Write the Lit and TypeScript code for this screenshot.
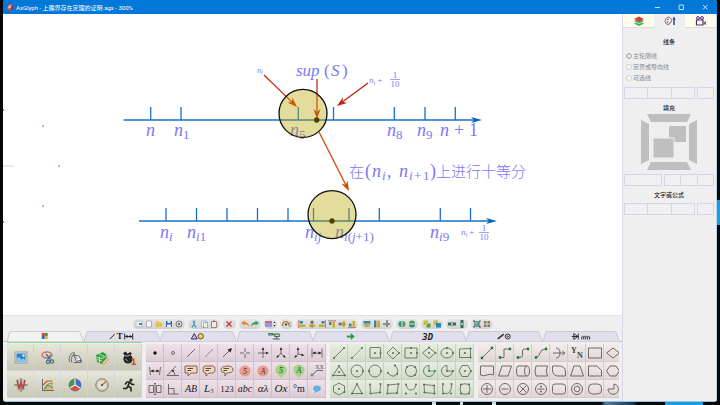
import { LitElement, html, svg, css } from "lit";
import type { SVGTemplateResult } from "lit";
import { customElement, property } from "lit/decorators.js";

type Icon = [label: string, art: SVGTemplateResult];

/* ---------- small drawing helpers (18 x 18 cells) ---------- */

const path = (d: string) => svg`<path d=${d}></path>`;
const solid = (d: string, fill = "#222") => svg`<path d=${d} fill=${fill} stroke="none"></path>`;
const dot = (x: number, y: number, r = 1, fill = "#666") =>
  svg`<circle cx=${x} cy=${y} r=${r} fill=${fill} stroke="none"></circle>`;
const ring = (x: number, y: number, r: number) => svg`<circle cx=${x} cy=${y} r=${r}></circle>`;
const glyph = (t: string, size = 10, style = "italic", y = 12, x = 9, fill = "#222") =>
  svg`<text x=${x} y=${y} font-size=${size} font-style=${style} fill=${fill} stroke="none" text-anchor="middle">${t}</text>`;
const handles = (...pts: number[][]) => pts.map(([x, y]) => svg`<circle cx=${x} cy=${y} r="1.1" fill="#66705f" stroke="none"></circle>`);

/* ---------- palettes ---------- */

const mediaIcons: Icon[] = [
  ["Image", svg`<rect x="3" y="3" width="12" height="11" fill="#dfe6ea" stroke="#8a98a0"></rect><rect x="4.5" y="4.5" width="9" height="8" fill="#2f82cf" stroke="none"></rect>${solid("M4.5 12.500V9.500L7 8L9.500 10.500L11.500 9.500L13.500 11V12.500Z", "#8ec4e8")}${dot(11.500, 6.500, 1.2, "#ffe9a0")}`],
  ["Cut out", svg`<ellipse cx="8" cy="6" rx="5" ry="3" stroke="#cf6f6f" stroke-width="1.400"></ellipse><g stroke="#4b7690" stroke-width="1.300">${path("M7 5L12 11M12 5.500L8.500 11")}${ring(13, 12.5, 1.6)}${ring(9, 13, 1.6)}</g>`],
  ["Pen", svg`${path("M3.500 13C2 8 5 2.500 9 4M6 13.500C4.500 10 6 5.500 9 5")}<path d="M7.500 6L13 7L15 11L10.500 12.500Z" fill="#e6eef0"></path>${path("M8 6.500L11.500 10M8 13.500H15")}${dot(15, 12, 1.100, "#27708a")}`],
  ["Eraser", svg`${solid("M3 6L10 3L14 6V8L9 15L4 13Z", "#36a043")}<g stroke="#d7f1d3" stroke-width=".800">${path("M3.500 8L9 9.500L14 6.500M4 10.500L9 12M6 5L11 7.500M6.500 8V13.500")}</g><path d="M9 14L14 9L15.500 10.500L11 15Z" fill="#f3cf8f" stroke="#a97746" stroke-width=".600"></path>`],
  ["Brush", svg`${dot(8, 10, 4.600, "#222")}${solid("M3 4L6 2.500L7.500 5L10 3L12 4.500L9.500 7L5 7.500Z")}<g stroke="#ddd" stroke-width=".800">${path("M4.500 6.500Q7 8 10 6M5.500 10L8 12.500")}</g>${solid("M11.500 10.500L14.500 9V14.500H16V16H11.500V14.500H13V11.300H11.500Z", "#df4a2c")}`],
  ["Curve", svg`<rect x="4.500" y="3.500" width="9" height="10" fill="#b9bab4" stroke="none"></rect><g stroke="#555" stroke-width=".900">${path("M2 9H16M9 2V16")}</g><path d="M5 4L7 12.500L9 7L11 12.500L13 4" stroke="#c93a3a" stroke-width="1.300"></path>`],
  ["Chart", svg`${solid("M4 14L8 7L11 9L14 4V14Z", "#e4b968")}<g stroke="#ce4b3c" stroke-width="1.100">${path("M4 9L8 5L13 5")}</g><g stroke="#3a9ac8" stroke-width="1.100">${path("M5 13L9 9L14 12")}</g><g stroke="#57a444">${path("M6 13Q9 5 14 8")}</g>${path("M3.500 3V14.500H15")}`],
  ["Colors", svg`<circle cx="9" cy="9" r="6" fill="#d9503f" stroke="#777"></circle>${solid("M9 9V3A6 6 0 0 0 3.800 12Z", "#3e9c4c")}${solid("M9 9V3A6 6 0 0 1 14.200 12Z", "#3e6fd0")}<g stroke="#e9e9e9" stroke-width="1.200">${path("M9 9V3M9 9L14.200 12M9 9L3.800 12")}</g>`],
  ["Gauge", svg`<circle cx="9" cy="9" r="6.200" fill="#e3e1cf" stroke="#666"></circle><circle cx="9" cy="9" r="4.800" stroke="#a5a392" stroke-dasharray="1 1"></circle><path d="M8 10L13 5.500" stroke="#df5b3d" stroke-width="1.200"></path>${dot(9, 9, 1, "#555")}`],
  ["Run", svg`${dot(11, 4, 1.6, "#222")}<g stroke="#222" stroke-width="1.600">${path("M9.500 6L8 10L11 12V15.500M8 10L6.500 12.500H3M5 8.500L7 6H10L12 8.500H14.500")}</g>`],
];

const bubble = (d: string) => svg`<path d=${d} fill="#f5d3b8" stroke="#705a50"></path><path d="M5.500 6.500H11M5.500 8.500H9" stroke="#4a3a34" stroke-width=".900"></path>`;
const badge = (t: string, fill: string) => svg`${dot(9, 9, 5.6, fill)}${glyph(t, 8, "italic", 12, 9, "#5a2a2a")}`;
const pin = (t: string) => svg`${solid("M9 16L4.300 11A5.500 5.500 0 1 1 13.700 11Z", "#a5d385")}${glyph(t, 8, "italic", 11, 9, "#234a1a")}`;

const markIcons: Icon[] = [
  ["Point", dot(9, 9, 1.7, "#111")],
  ["Open point", ring(9, 9, 1.5)],
  ["Line", path("M5 13L13 5")],
  ["Thin line", svg`<path d="M5 13L13 5" stroke-width=".600"></path>`],
  ["Arrow", svg`${path("M5 13L13 5")}${solid("M14 4L12.500 8.500L11 7L9.500 5.500Z")}`],
  ["Cross", svg`${path("M9 4V8M9 10V14M4 9H8M10 9H14")}`],
  ["Axes", svg`${path("M9 5V14M4 9H13")}${solid("M9 3L10.300 6H7.700ZM15 9L12 10.300V7.700Z")}`],
  ["Axes 3D", svg`${path("M9 5V9L5.500 13M9 9L12.500 13")}${solid("M9 3L10.300 6H7.700ZM4.500 14L5.200 11.200L7.200 12.600ZM13.500 14L12.800 11.200L10.800 12.600Z")}`],
  ["Axes oblique", svg`${path("M8 5V10L5.500 13M8 10L13 11")}${solid("M8 3L9.300 6H6.700ZM4.500 14L5.200 11.200L7.200 12.600ZM14.500 11.200L11.500 12.300V9.700Z")}`],
  ["Dimension", svg`${path("M4 4.500V13.500M14 4.500V13.500M5 9H13")}${solid("M4.500 9L7.500 7.500V10.500ZM13.500 9L10.500 7.500V10.500Z")}`],
  ["Dimension 2", svg`${path("M3.500 5L4.500 13M14.500 5L13.500 13M5 9H13")}${solid("M4.500 9L7.500 7.500V10.500ZM13.500 9L10.500 7.500V10.500Z")}`],
  ["Angle", svg`${path("M3 13.500H15M3 13.500L12 4M8 8.500Q11 10 11 13.500")}${solid("M7.500 8L10.500 8.300L9 10.500Z")}`],
  ["Callout", bubble("M3 4H15V11H9L6 14V11H3Z")],
  ["Round callout", bubble("M5 4H13Q15 4 15 7.500T13 11H9L6 14V11H5Q3 11 3 7.500T5 4Z")],
  ["Oval callout", bubble("M9 4Q15 4 15 7.500T9 11L7 14V11Q3 10.500 3 7.500T9 4Z")],
  ["Number badge", badge("5", "#ee9a90")],
  ["Letter badge", badge("A", "#ee9a90")],
  ["Number pin", pin("5")],
  ["Letter pin", pin("A")],
  ["Leader", svg`${ring(4, 13, 1)}${path("M5 12L9 8.500H15")}${glyph("XX", 6, "normal", 7, 11.5, "#555")}`],
  ["Text frame", svg`${path("M3 5.500H7.500V12.500H3ZM10.500 5.500H15V12.500H10.500ZM9 4V14M8 3.500H10M8 14.500H10")}`],
  ["Right angle", svg`${path("M4.500 4V14H14.500M4.500 8.500H10V14")}`],
  ["AB", glyph("AB")],
  ["L5", svg`${glyph("L", 11, "italic", 12, 7)}${glyph("5", 6, "italic", 13, 12)}`],
  ["123", glyph("123", 9, "normal")],
  ["abc", glyph("abc", 10)],
  ["Greek", glyph("αλ", 11)],
  ["Ox", glyph("Ox", 11)],
  ["Degree", glyph("°m", 10, "normal")],
  ["Comment", svg`<ellipse cx="9" cy="8.500" rx="3.800" ry="3" fill="#5fb1e6" stroke="none"></ellipse>${solid("M7 10L6.500 13.500L10 11Z", "#5fb1e6")}`],
];

const shapeIcons: Icon[] = [
  ["Segment", svg`${path("M4 14L14 4")}${handles([4, 14], [14, 4])}`],
  ["Thin segment", svg`<path d="M4 14L14 4" stroke-width=".600"></path>${handles([4, 14], [14, 4])}`],
  ["Square", svg`${path("M4 3.500H14.500V14H4Z")}${handles([9, 9], [14.5, 9])}`],
  ["Diamond", svg`${path("M9 3L15 9L9 15L3 9Z")}${handles([9, 9], [15, 9])}`],
  ["Rectangle", svg`${path("M3 4H15V14H3Z")}${handles([9, 9], [9, 4], [15, 9])}`],
  ["Rhombus", svg`${path("M9 3.500L15.500 9L9 14.500L2.500 9Z")}${handles([9, 9], [9, 3.5], [15.500, 9])}`],
  ["Ellipse", svg`<ellipse cx="9" cy="9" rx="6" ry="5"></ellipse>${handles([9, 9], [9, 4], [15, 9])}`],
  ["Skewed box", svg`${path("M3.500 5L14.500 4.500V13.500H3.500Z")}${handles([9, 9], [14.500, 4.500], [14.5, 13.5])}`],
  ["Triangle", svg`${path("M9 4L15 13.500H3Z")}${handles([9, 4], [15, 13.500], [3, 13.5], [9, 10])}`],
  ["Circle", svg`${ring(9, 9, 6)}${handles([9, 9], [15, 9])}`],
  ["Circle 2", svg`${ring(9, 9, 6)}${handles([3, 9], [15, 9])}`],
  ["Arc", svg`${path("M11 3.500Q16 9 12 13Q8 16 4 11")}${handles([11, 3.500], [4, 11], [13, 12])}`],
  ["Circle 3", svg`${ring(9, 9, 5.500)}${handles([5, 5], [13, 5], [13, 13])}`],
  ["Sector", svg`${path("M9 3.500A5.500 5.500 0 1 0 14.500 9")}<path d="M9 9H14.500" stroke="#2f9fb5"></path>${path("M9 9V3.500")}${handles([9, 9], [15, 9])}`],
  ["Sector 2", svg`${path("M9 3.500A5.500 5.500 0 1 0 14.500 9H9Z")}${handles([9, 9], [15, 9])}`],
  ["Hexagon", svg`${path("M6 3.500H12L15 9L12 14.500H6L3 9Z")}${handles([9, 9], [15, 9])}`],
  ["Hexagon 2", svg`${path("M9 3L14.500 6V12L9 15L3.500 12V6Z")}${handles([9, 9], [14.500, 12])}`],
  ["Triangle 2", svg`${path("M9 4L14 13.500H4Z")}${handles([9, 4], [14, 13.500], [4, 13.5])}`],
  ["Open polyline", svg`${path("M4 4.500L4.500 13.500L14 12.500L14.500 4")}${handles([4, 4.500], [4.5, 13.5], [14, 12.500], [14.500, 4])}`],
  ["Quadrilateral", svg`${path("M4 5L14.500 4L13 13L3.500 13.500Z")}${handles([4, 5], [14.500, 4], [13, 13], [3.500, 13.500])}`],
  ["Bezier", svg`${path("M4 4.500Q5 10 9 10T14 4.500")}${handles([4, 4.500], [14, 4.500], [4, 13.500], [14, 13.500])}`],
  ["Polygon", svg`${path("M4 4.500L14 5.500L14.500 13.500L4.500 12.500Z")}${handles([4, 4.500], [14, 5.500], [14.500, 13.500], [4.500, 12.500])}`],
  ["Open curve", svg`${path("M5 4Q4 12 6 13.500Q14 15 13.500 4")}${handles([5, 4], [5, 13.500], [13, 13.500], [13.500, 4])}`],
  ["Closed curve", svg`${path("M5 4.500Q9 3 13 4.500Q15 9 13 13.500Q9 15 5 13.500Q3 9 5 4.500Z")}${handles([5, 4.500], [13, 4.500], [13, 13.500], [5, 13.500])}`],
];

const ends = (x1: number, y1: number, x2: number, y2: number) => svg`${dot(x1, y1, 1.400, "#17803a")}${dot(x2, y2, 1.400, "#17803a")}`;
const flowIcons: Icon[] = [
  ["Connector", svg`${path("M4 14L14 4")}${ends(4, 14, 14, 4)}`],
  ["Elbow", svg`${path("M4 13.500H8V5H14")}${ends(4, 13.5, 14, 5)}`],
  ["Rounded elbow", svg`${path("M4 13.500H6Q8.500 13.500 8.500 11V7Q8.500 5 10.500 5H14")}${ends(4, 13.5, 14, 5)}`],
  ["Curved connector", svg`${path("M4 13.500Q7 13 8 9Q9 5 14 5")}${ends(4, 13.5, 14, 5)}`],
  ["Junction", path("M3 9H15M12.500 7L15 9L12.500 11M6 4Q10 4 10 9T6 14")],
  ["Yes / No", svg`<g font-weight="bold">${glyph("Y", 8, "normal", 9, 6, "#444")}${glyph("N", 8, "normal", 14, 12, "#444")}</g>`],
  ["Process", path("M2.500 4H15.500V14H2.500Z")],
  ["Decision", path("M9 4L15.500 9L9 14L2.500 9Z")],
  ["Document", path("M2.500 4H15.500V13Q12 11.500 9 13T2.500 13Z")],
  ["Data", path("M6 4H15.500L12 14H2.500Z")],
  ["Cylinder", svg`${path("M4 4H13Q15.500 4 15.500 9T13 14H4Q2.500 14 2.500 9T4 4ZM12.500 4Q10.500 5 10.500 9T12.500 14")}`],
  ["Stored data", path("M4 4H15.500Q13 9 15.500 14H4Q2 9 4 4Z")],
  ["Card", path("M2.500 4H10Q15.500 5 15.500 10V14H7Q2.500 13 2.500 8Z")],
  ["Manual", path("M6 4H12L15.500 14H2.500Z")],
  ["Snip", path("M2.500 4H11L15.500 8.500V14H2.500Z")],
  ["Preparation", path("M6 4H12L15.500 9L12 14H6L2.500 9Z")],
  ["Sum", svg`${ring(9, 9, 5.500)}${path("M9 5V13M5 9H13")}`],
  ["Minus", svg`${ring(9, 9, 5.500)}${path("M5.500 9H12.500")}`],
  ["Times", svg`${ring(9, 9, 5.500)}${path("M5.500 5.500L12.500 12.500M12.500 5.500L5.500 12.500")}`],
  ["Divide", svg`${ring(9, 9, 5.500)}${path("M5.500 9H12.500")}${dot(9, 6.500)}${dot(9, 11.500)}`],
  ["Rounded box", svg`<rect x="2.500" y="4" width="13" height="10" rx="2.500"></rect>`],
  ["Double ring", svg`${ring(9, 9, 5.500)}${ring(9, 9, 2.800)}`],
  ["Terminal", svg`<rect x="2.500" y="4" width="13" height="10" rx="4"></rect>`],
  ["Pie", path("M10 4A5.200 5.200 0 1 1 4 9H10Z")],
];

/* ---------- toolbar (10 x 10 icons) ---------- */

const bars = (a: string, b: string) => svg`${solid(a, "#2e8f94")}${solid(b, "#c2b12c")}`;
const page = svg`<path d="M2.500 2H7.500V8H2.500Z" fill="#f6f8fa" stroke="#9aa6b0" stroke-width=".800"></path>`;
const toolGroups: Icon[][] = [
  [
    ["New window", svg`<rect x="2" y="2" width="6" height="6" fill="#e9eef2" stroke="#b4bec6" stroke-width=".800"></rect>${solid("M5 4H8V6H5Z", "#3d87b8")}`],
    ["New", page],
    ["Open", solid("M1.500 2.500H4.500L5.500 3.500H8V5H9L7.500 8H1.500Z", "#efbf3f")],
    ["Save", svg`${solid("M2 2H8V8H2Z", "#4262b8")}${solid("M3.500 2H6.500V4H3.500ZM3 5.500H7V8H3Z", "#dfe6f5")}`],
    ["Settings", svg`<circle cx="5" cy="5" r="3" stroke="#777" stroke-width="1"></circle>${dot(5, 5, 1.2, "#777")}`],
  ],
  [
    ["Cut", svg`<g stroke="#4c9bc4" stroke-width="1">${path("M4 1.500L6 7M6 1.500L4 7")}</g>${dot(3.500, 7.500, 1, "#4c9bc4")}${dot(6.500, 7.500, 1, "#4c9bc4")}`],
    ["Copy", svg`${page}<path d="M4.500 3.500H8.500V8.500H4.500Z" fill="#eef2f5" stroke="#8b97a1" stroke-width=".700"></path>`],
    ["Paste", svg`<path d="M2.500 2.500H7.500V8.500H2.500Z" fill="#eee9df" stroke="#8a7f70" stroke-width=".900"></path>${solid("M4 1.500H6V3H4Z", "#777")}`],
  ],
  [["Delete", svg`<path d="M2.500 2.500L7.500 7.500M7.500 2.500L2.500 7.500" stroke="#d8332f" stroke-width="1.300"></path>`]],
  [
    ["Undo", svg`${solid("M1 4L4.500 1.500V3Q8.500 3 9 7.500Q7 5 4.500 5.200V6.500Z", "#f08228")}`],
    ["Redo", svg`${solid("M9 4L5.500 1.500V3Q1.500 3 1 7.500Q3 5 5.500 5.200V6.500Z", "#2fa560")}`],
  ],
  [["Page background", svg`${solid("M0 2H7V8H0Z", "#8b9fe0")}${solid("M0 2H7V4H0Z", "#cc6a7b")}${solid("M8.500 4L9.500 2.500L10.500 4ZM8.500 6L9.500 7.500L10.500 6Z")}`]],
  [["Rotate", svg`<path d="M2 7A3 3 0 1 1 7.500 6.500" stroke="#c8762c" stroke-width="1.400"></path>${dot(5, 5.5, 1.1, "#333")}${dot(9, 4, 0.700, "#2671c0")}${dot(9, 7, 0.700, "#2671c0")}`]],
  [
    ["Align left", svg`${bars("M3 2H6V4.500H3Z", "M3 5.500H8.500V8H3Z")}${solid("M1.500 1H2.300V9H1.500Z", "#c04848")}`],
    ["Align center", svg`${bars("M3.500 2H6.500V4.500H3.500Z", "M2 5.500H8V8H2Z")}${solid("M4.700 1H5.400V9H4.700Z", "#c04848")}`],
    ["Align right", svg`${bars("M4.500 2H7.500V4.500H4.500Z", "M2 5.500H7.500V8H2Z")}${solid("M7.900 1H8.600V9H7.900Z", "#c04848")}`],
    ["Align top", svg`${bars("M2 3H4.500V6H2Z", "M5.500 3H8V8.500H5.500Z")}${solid("M1 1.500H9V2.300H1Z", "#c04848")}`],
    ["Align middle", svg`${bars("M2 3.500H4.500V6.500H2Z", "M5.500 2H8V8H5.500Z")}${solid("M1 4.700H9V5.400H1Z", "#c04848")}`],
    ["Align bottom", svg`${bars("M2 4.500H4.500V7.500H2Z", "M5.500 2H8V7.500H5.500Z")}${solid("M1 7.900H9V8.600H1Z", "#c04848")}`],
  ],
  [
    ["Same width", svg`${bars("M1.500 2H8.500V4H1.500Z", "M2.500 6H7.500V8H2.500Z")}${solid("M1.500 4.600H8.500V5.300H1.500Z", "#333")}`],
    ["Same height", svg`${bars("M2 1.500H4V8.500H2Z", "M6 1.500H8V8.500H6Z")}${solid("M4.600 1.500H5.300V8.500H4.600Z", "#c04848")}`],
    ["Center", svg`<path d="M5 1V9M1 5H9" stroke="#333" stroke-width=".900" stroke-dasharray="3 1"></path>${dot(5, 5, 1.2, "#7a8490")}`],
  ],
  [
    ["Flip horizontal", svg`${solid("M4.500 2A3 3 0 0 0 4.500 8Z", "#2e8f94")}${solid("M5.500 2A3 3 0 0 1 5.500 8Z", "#4f9c4a")}`],
    ["Flip vertical", svg`${solid("M2 4.500A3 3 0 0 1 8 4.500Z", "#4f9c4a")}${solid("M2 5.500A3 3 0 0 0 8 5.500Z", "#2e8f94")}`],
  ],
  [
    ["Bring forward", svg`${solid("M4.500 4.500H8.500V8.500H4.500Z", "#4f9c4a")}${solid("M1.500 1.500H6V6H1.500Z", "#c9bd30")}`],
    ["Send back", svg`${solid("M1.500 1.500H6V6H1.500Z", "#c9bd30")}${solid("M4 4H9V8.500H4Z", "#2a86b8")}`],
  ],
  [
    ["Distribute horizontally", svg`${solid("M1 3.500H9V6.500H1Z", "#2e6e78")}${solid("M4 4H6V6H4Z", "#c9bd30")}`],
    ["Distribute vertically", svg`${solid("M3.500 1H6.500V9H3.500Z", "#2e6e78")}${solid("M4 4H6V6H4Z", "#c9bd30")}`],
  ],
  [
    ["Group", svg`${solid("M2 2H8V8H2Z", "#5a9bb0")}${solid("M3 3H5V5H3Z", "#c9bd30")}${dot(2, 2, 0.8, "#333")}${dot(8, 2, 0.8, "#b33")}${dot(2, 8, 0.8, "#b33")}${dot(8, 8, 0.8, "#333")}`],
    ["Ungroup", svg`${solid("M2 2H4.500V4.500H2ZM5.500 5.500H8V8H5.500Z", "#4f8c60")}${solid("M5.500 2H8V4.500H5.500ZM2 5.500H4.500V8H2Z", "#c25a5a")}`],
  ],
];

/* ---------- category tabs (77 x 11) ---------- */

const tabIcons: Icon[] = [
  ["Media", svg`${solid("M35 2H38V5H35Z", "#d8432f")}${solid("M38 2H41V5H38Z", "#2f9c45")}${solid("M35 5H38V8H35Z", "#2c6ec8")}${solid("M38 5H41V8H38Z", "#eab22c")}`],
  ["Annotations", svg`<path d="M26 8L31 3" stroke="#222"></path><g font-weight="bold">${glyph("T", 9, "normal", 8, 36)}</g><path d="M41 2.500V8.500M49 2.500V8.500M42 5.500H48" stroke="#222"></path>${solid("M41 5.500L44 4V7ZM49 5.500L46 4V7Z")}`],
  ["Shapes", svg`<path d="M34.500 2.500L37.500 8H31.500Z" fill="#d0b4ea" stroke="#3e2b58"></path><circle cx="41" cy="5.300" r="2.700" fill="#f4cf5a" stroke="#6a5426"></circle>`],
  ["Flow", svg`<rect x="32" y="2.500" width="4" height="1.500" stroke="#2c7a4a"></rect><rect x="38" y="3" width="4.500" height="2.500" fill="#bfe6a8" stroke="#2c7a4a"></rect><path d="M36 3.500H38M40 5.500V8M36 8H43" stroke="#555"></path>`],
  ["Arrows", solid("M34 4.400H38V2L42 5.500L38 9V6.600H34Z", "#22a045")],
  ["3D", svg`<g font-weight="bold" font-family="DejaVu Sans Mono">${glyph("3D", 9, "italic", 9, 38)}</g>`],
  ["Mechanics", svg`<path d="M32 8L38 3" stroke="#333" stroke-width="1.600"></path><circle cx="42" cy="5.500" r="2.500" stroke="#333"></circle><circle cx="42" cy="5.500" r=".700" stroke="#333"></circle>`],
  ["Circuits", svg`<path d="M29 5.500H36M31 2.500V8.500L35 5.500ZM35.500 2.500V8.500M39 8.500V6Q40 4.500 41 6V8.500M41 6Q42 4.500 43 6V8.500M43 6Q44 4.500 45 6V8.500M45 6Q46 4.500 47 6V8.500" stroke="#222" stroke-width=".900"></path>`],
];

/* ---------- number lines on the canvas ---------- */

const INK = "#7b78f5";
const axis = (y: number, x1: number, x2: number, ticks: number[]) => svg`
  <path d=${`M${x1} ${y}H${x2 - 6}`} stroke="#1a6fcb" stroke-width="1.500"></path>
  ${solid(`M${x2} ${y}L${x2 - 11} ${y - 3}L${x2 - 8} ${y}L${x2 - 11} ${y + 3}Z`, "#0a62c6")}
  ${ticks.map((x) => svg`<path d=${`M${x} ${y}V${y - 13}`} stroke="#1a6fcb" stroke-width="1.300"></path>`)}`;

const arrow = (x1: number, y1: number, x2: number, y2: number, color: string) => {
  const a = Math.atan2(y2 - y1, x2 - x1);
  const at = (back: number, side: number) =>
    `${(x2 - back * Math.cos(a) - side * Math.sin(a)).toFixed(1)} ${(y2 - back * Math.sin(a) + side * Math.cos(a)).toFixed(1)}`;
  return svg`<path d=${`M${x1} ${y1}L${at(7, 0)}`} stroke=${color} stroke-width="1.300"></path>
    ${solid(`M${x2} ${y2}L${at(10, 3.5)}L${at(7, 0)}L${at(10, -3.5)}Z`, color)}`;
};

/* A variable with its index: letters slant, digits and brackets stand upright. */
const mark = (x: number, y: number, base: string, sub = "") => svg`
  <text x=${x} y=${y} font-size="18" font-style="italic">${base}</text>
  <text x=${x + 9} y=${y + 3} font-size="13">${[...sub].map((c) => svg`<tspan font-style=${/[a-z]/.test(c) ? "italic" : "normal"}>${c}</tspan>`)}</text>`;

const tenth = (x: number, y: number, gap: number, rise: number) => svg`
  <text x=${x} y=${y} font-size="9" font-style="italic">n<tspan font-size="6" dy="2">i</tspan><tspan font-size="9" font-style="normal" dy="-2" dx="2">+</tspan></text>
  <g text-anchor="middle" font-size="9">
    <text x=${x + gap} y=${y - 5 + rise}>1</text>
    <text x=${x + gap} y=${y + 4 + rise}>10</text>
  </g>
  <path d=${`M${x + gap - 5} ${y - 3.500 + rise}h10`} stroke=${INK} stroke-width=".700"></path>`;

@customElement("icon-palette")
class IconPalette extends LitElement {
  @property() tone = "stone";
  @property({ attribute: false }) icons: Icon[] = [];

  static styles = css`
    :host { display: block; flex: none; }
    .grid { display: grid; grid-auto-rows: 18px; border-radius: 1px; }
    .stone { grid-template-columns: repeat(5, 27px); grid-auto-rows: 27px; --top: #e6e6da; --low: #c7c7b5; --edge: #d3d3d6; }
    .rose { grid-template-columns: repeat(10, 18px); --top: #efe2e8; --low: #dccad2; --edge: #cdbfcf; }
    .leaf { grid-template-columns: repeat(8, 18px); --top: #e6eee0; --low: #cfdcc6; --edge: #c6d0cb; }
    .clay { grid-template-columns: repeat(8, 18px); --top: #f3ecea; --low: #dfd6d3; --edge: #d2cad4; }
    button {
      padding: 0; border: 0; min-width: 0;
      box-shadow: inset -1px -1px 0 var(--edge);
      background: linear-gradient(var(--top), var(--low));
      display: flex; align-items: center; justify-content: center;
    }
    svg { display: block; width: 18px; height: 18px; fill: none; stroke: #625c60; stroke-width: 0.9; font-family: "Liberation Serif", serif; }
    .leaf svg { stroke: #66705f; }
  `;

  render() {
    return html`<div class="grid ${this.tone}">
      ${this.icons.map(([label, art]) => html`<button aria-label=${label}><svg viewBox="0 0 18 18" aria-hidden="true">${art}</svg></button>`)}
    </div>`;
  }
}

@customElement("style-panel")
class StylePanel extends LitElement {
  static styles = css`
    :host { display: block; background: #efefef; border-left: 1px solid #d9d7e6; border-right: 1px solid #b5d8f2; box-sizing: border-box; font: 6px/8px "Noto Sans CJK SC", sans-serif; color: #222; }
    .tabs { display: grid; grid-template-columns: repeat(3, 1fr); height: 14px; }
    .tabs button { padding: 0; border: 0; border-bottom: 1px solid #dcdbe4; background: #fefeea; display: flex; align-items: center; justify-content: center; }
    .tabs .on { background: #efefef; border-color: #efefef; }
    svg { display: block; fill: none; }
    .tabs svg { width: 12px; height: 12px; }
    .body { padding: 0 2px 0 1px; display: flex; flex-direction: column; }
    h2 { margin: 5px 0 0; font-size: 6px; font-weight: 500; text-align: center; }
    h2.lines { margin-top: 10px; }
    .radios { margin: 4px 2px 0; padding: 0; border: 0; color: #888; }
    label { display: flex; align-items: center; gap: 1px; height: 11px; }
    input { appearance: none; margin: 0; width: 6px; height: 6px; border: 1px solid #d2d2d2; border-radius: 50%; background: #f8f8f8; }
    input:checked { border-color: #aaa; background: #e4e4e4; }
    .row { display: flex; gap: 2px; height: 12px; margin-top: 4px; }
    .set { display: flex; flex: 3; border: 1px solid #d6d6e4; box-sizing: border-box; }
    .row > .set:last-child { flex: 0 0 17px; }
    .row.fill > .set { flex: 0 0 38px; }
    .row.fill > .set:last-child { flex: 1; }
    .set button { flex: 1; padding: 0; border: 0; background: #f0f0f0; }
    .set button + button { border-left: 1px solid #d6d6e4; }
    .shape { width: 56px; height: 56px; margin: 2px auto 0; }
  `;

  private set(name: string, count: number) {
    return html`<div class="set">${Array.from({ length: count }, (_, i) => html`<button aria-label="${name} ${i + 1}"></button>`)}</div>`;
  }

  render() {
    return html`
      <div class="tabs">
        <button aria-label="Layers"><svg viewBox="0 0 12 12">
          <path d="M6 6.500L11 8.500L6 11L1 8.500Z" fill="#48b04a"></path><path d="M6 4.500L11 6.500L6 9L1 6.500Z" fill="#bfe4f0"></path><path d="M6 4L11 6L6 8L1 6Z" fill="#35a066"></path><path d="M6 1.500L11 4L6 6.500L1 4Z" fill="#e33b30"></path></svg></button>
        <button class="on" aria-label="Style"><svg viewBox="0 0 12 12">
          <path d="M4.500 2Q1 3 1 6.500Q1.500 10 5 9.500Q5 7.500 7 7.500Q8.500 3 4.500 2Z" stroke="#555" stroke-width=".800" fill="#faf6f6"></path><circle cx="4" cy="4.500" r=".900" fill="#d55"></circle><circle cx="3.500" cy="7" r=".900" fill="#4a4"></circle><path d="M10 3V10" stroke="#22406e" stroke-width="1.400"></path><path d="M8.500 4.500L10 1.500L11.500 4.500Z" fill="#22406e"></path></svg></button>
        <button aria-label="Animation"><svg viewBox="0 0 12 12">
          <circle cx="3" cy="3" r="1.400" stroke="#4d2a78"></circle><circle cx="7" cy="3" r="1.400" stroke="#4d2a78"></circle><path d="M1.500 5H8V10H1.500Z" stroke="#4d2a78" stroke-width="1.200"></path><path d="M8.500 7.500L11 6V10L8.500 9Z" fill="#7d62a0"></path></svg></button>
      </div>
      <div class="body">
        <h2 class="lines">线条</h2>
        <fieldset class="radios">
          <label><input type="radio" name="line" checked />主轮廓线</label>
          <label><input type="radio" name="line" />定界或导向线</label>
          <label><input type="radio" name="line" />可选线</label>
        </fieldset>
        <div class="row">${this.set("Line", 3)}${this.set("Line option", 1)}</div>
        <h2>填充</h2>
        <svg class="shape" viewBox="0 0 56 56">
          <g fill="#bfbfbf"><path d="M6 0H50L46 8H10ZM6 56H50L46 48H10ZM0 6V50L8 46V10ZM56 6V50L48 46V10Z"></path>
          <path d="M28 12H45V28H28Z"></path><path d="M12 24H33V44H12Z" stroke="#efefef"></path></g>
        </svg>
        <div class="row fill">${this.set("Fill", 1)}${this.set("Fill option", 3)}</div>
        <h2>文字或公式</h2>
        <div class="row">${this.set("Text", 3)}${this.set("Text option", 1)}</div>
      </div>`;
  }
}

@customElement("app-root")
class AppRoot extends LitElement {
  static styles = css`
    :host {
      display: flex; box-sizing: border-box; height: 100vh; padding: 0 3px 3px;
      background:
        linear-gradient(#1d9bdc, #1d9bdc) right 200px / 3px 25px no-repeat,
        linear-gradient(100deg, transparent 15%, #4d7d9c 25%, #16384f 90%, transparent) 595px bottom / 42px 3px no-repeat,
        linear-gradient(#1d9bdc, #1d9bdc) 665px bottom / 38px 3px no-repeat,
        linear-gradient(#ddd, #ddd) 432px bottom / 4px 3px no-repeat,
        linear-gradient(#ddd, #ddd) 460px bottom / 3px 3px no-repeat,
        linear-gradient(#ddd, #ddd) 492px bottom / 4px 3px no-repeat,
        #060606;
      font-family: "Noto Sans", "Noto Sans CJK SC", sans-serif;
    }
    svg { display: block; fill: none; }
    .window { flex: 1; min-width: 0; display: flex; flex-direction: column; border-radius: 3px; overflow: hidden; background: #efefef; border-bottom: 1px solid #8cc4ea; }
    header { flex: none; height: 14px; display: flex; align-items: center; background: #0078d7; color: #fff; padding-left: 4px; gap: 2px; }
    h1 { margin: 0; font-size: 6px; font-weight: 400; flex: 1; font-family: Roboto, "Noto Sans CJK SC", sans-serif; }
    header button { width: 22px; height: 14px; padding: 0; border: 0; background: none; display: flex; align-items: center; justify-content: center; }
    header button:last-child { margin-right: 1px; }
    .logo { width: 7px; height: 7px; }
    .ctl { width: 6px; height: 6px; stroke: #fff; stroke-width: 0.8; }
    .main { flex: 1; min-height: 0; display: flex; }
    .work { flex: 1; min-width: 0; display: flex; flex-direction: column; }
    .canvas { flex: 1; min-height: 0; width: 100%; background: #fff; font-family: "Liberation Serif", "Noto Sans CJK SC", serif; }
    .tools { flex: none; height: 16px; display: flex; align-items: center; justify-content: center; gap: 3px; border-top: 1px solid #e2e2e2; box-sizing: border-box; }
    .pill { display: flex; padding: 0 1px; height: 10px; border-radius: 5px; background: linear-gradient(#e6e6e6, #d2d2d2); }
    .pill button { width: 10px; padding: 0; border: 0; background: none; }
    .pill.one button { width: 11px; }
    .pill svg { width: 10px; height: 10px; margin: auto; overflow: visible; }
    nav { flex: none; display: grid; grid-template-columns: repeat(8, 1fr); padding: 0 3px 0 4px; height: 11px; box-shadow: inset 0 -1px 0 #c3c0d2; }
    nav button { padding: 0; border: 0; background: none; min-width: 0; }
    nav svg { width: 100%; height: 11px; font-family: "Liberation Serif", serif; }
    .edge { fill: #e2dfec; stroke: #c3c0d2; stroke-width: 0.8; }
    .on .edge { fill: #f2f2f2; }
    .palettes { flex: none; display: flex; gap: 4px; padding-bottom: 3px; margin: 0 3px 0 4px; overflow: hidden; }
    .palettes > * { margin-top: 2px; }
    .palettes > .first { margin-top: 0; border-top: 1px solid #86e08a; padding-top: 1px; }
    style-panel { flex: 0 0 95px; }
  `;

  private drawing() {
    return svg`
      <g fill="#4a52d8">${[[3.5, 110], [43, 126], [59, 166], [43, 206], [3.5, 222]].map(([x, y]) => svg`<circle cx=${x} cy=${y} r=".800"></circle>`)}</g>
      <path d="M3 166H14" stroke="#c9c2e0" stroke-width=".800"></path>
      ${axis(120, 123.5, 482, [150.7, 181, 298.3, 333.5, 394.3, 425, 455.3])}
      ${axis(221, 139, 497, [166, 196.5, 227, 257.5, 288, 313.5, 349, 379.3, 440.3, 470.5])}
      <g fill=${INK}>
        <text x="257" y="73" font-size="8" font-style="italic">n<tspan font-size="6" dy="1">i</tspan></text>
        <text y="76" font-size="17"><tspan x="296" font-style="italic">sup</tspan><tspan x="324">(</tspan><tspan x="331" font-style="italic">S</tspan><tspan x="342">)</tspan></text>
        ${tenth(369, 83, 26, 0)}
        ${mark(146, 136, "n")}
        ${mark(174, 136, "n", "1")}
        ${mark(290, 136, "n", "5")}
        ${mark(387, 136, "n", "8")}
        ${mark(417, 136, "n", "9")}
        <text y="136" font-size="18"><tspan x="440" font-style="italic">n</tspan><tspan x="454">+</tspan><tspan x="469">1</tspan></text>
        <text y="177" font-size="18"><tspan x="349" font-size="15" font-weight="300">在</tspan><tspan x="365">(</tspan><tspan x="372" font-style="italic">n</tspan><tspan x="382" font-size="13" font-style="italic" dy="3">i</tspan><tspan x="387" dy="-3">,</tspan><tspan x="399" font-style="italic">n</tspan><tspan x="409" font-size="13" dy="3" font-style="italic">i</tspan><tspan x="414" font-size="13">+</tspan><tspan x="423" font-size="13">1</tspan><tspan x="430" dy="-3">)</tspan><tspan x="436" font-size="15" font-weight="300">上进行十等分</tspan></text>
        ${mark(160, 238, "n", "i")}
        ${mark(187, 238, "n", "i1")}
        ${mark(305, 238, "n", "ij")}
        ${mark(335, 238, "n", "i(j+1)")}
        ${mark(430, 238, "n", "i9")}
        ${tenth(461, 235, 23, 1)}
      </g>
      ${arrow(264, 75, 297, 107, "#cc2a0c")}
      ${arrow(317, 79, 317, 119, "#cc2a0c")}
      ${arrow(368, 83, 337, 106, "#c4200c")}
      ${arrow(319, 132, 349, 191, "#cf4a08")}
      <circle cx="316.700" cy="120" r="2.700" fill="#000"></circle>
      <circle cx="332" cy="221" r="2.700" fill="#000"></circle>
      <g fill="#bba705" fill-opacity=".4" stroke="#111" stroke-width="1.300">
        <circle cx="303" cy="113.400" r="24"></circle>
        <circle cx="332" cy="214.600" r="24"></circle>
      </g>`;
  }

  render() {
    return html`
      <div class="window">
        <header>
          <svg class="logo" viewBox="0 0 8 8"><circle cx="4" cy="4" r="3.600" fill="#d8553a"></circle><path d="M4 4L7 1.500Q8 6 5 7.500Z" fill="#5a3a8c"></path><path d="M1 3L4 1L5 4L2 5Z" fill="#f0b8a0"></path></svg>
          <h1>AxGlyph - 上确界存在定理的证明.agx - 300%</h1>
          <button aria-label="Minimize"><svg class="ctl" viewBox="0 0 6 6"><path d="M1 3.500H6"></path></svg></button>
          <button aria-label="Maximize"><svg class="ctl" viewBox="0 0 6 6"><rect x="1" y="1" width="4.500" height="4.500" rx=".500"></rect></svg></button>
          <button aria-label="Close"><svg class="ctl" viewBox="0 0 6 6"><path d="M1 1L5.500 5.500M5.500 1L1 5.500"></path></svg></button>
        </header>
        <div class="main">
          <div class="work">
            <svg class="canvas" viewBox="3 14 619 300" preserveAspectRatio="xMinYMin meet">${this.drawing()}</svg>
            <div class="tools">
              ${toolGroups.map((group) => html`<div class="pill ${group.length === 1 ? "one" : ""}">
                ${group.map(([label, art]) => html`<button aria-label=${label}><svg viewBox="0 0 10 10">${art}</svg></button>`)}
              </div>`)}
            </div>
            <nav>
              ${tabIcons.map(([label, art], i) => html`<button class=${i === 0 ? "on" : ""} aria-label=${label}>
                <svg viewBox="0 0 77 11" preserveAspectRatio="xMidYMid meet"><path class="edge" d="M0 10.500L3 .500H73L77 10.500"></path>${art}</svg>
              </button>`)}
            </nav>
            <div class="palettes">
              <div class="first"><icon-palette tone="stone" .icons=${mediaIcons}></icon-palette></div>
              <icon-palette tone="rose" .icons=${markIcons}></icon-palette>
              <icon-palette tone="leaf" .icons=${shapeIcons}></icon-palette>
              <icon-palette tone="clay" .icons=${flowIcons}></icon-palette>
            </div>
          </div>
          <style-panel></style-panel>
        </div>
      </div>`;
  }
}
